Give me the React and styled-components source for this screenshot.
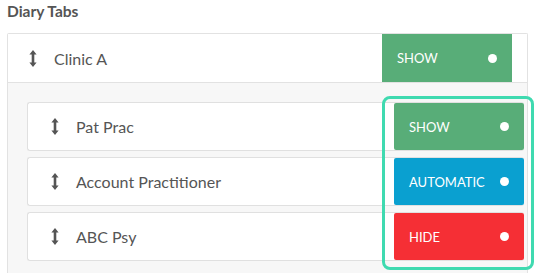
import React from 'react'
import styled, { createGlobalStyle } from 'styled-components'

const GlobalStyle = createGlobalStyle`
  html, body {
    margin: 0;
    padding: 0;
    background: #fff;
    font-family: Lato, "Open Sans", sans-serif;
  }
`

const tabs = [
  { name: 'Pat Prac', mode: 'show' },
  { name: 'Account Practitioner', mode: 'automatic' },
  { name: 'ABC Psy', mode: 'hide' },
]

const modeColors = {
  show: '#58ad78',
  automatic: '#0aa0d0',
  hide: '#f52f35',
}

const MoveIcon = () => (
  <svg width="8" height="17" viewBox="0 0 8 17">
    <path d="M4 0 L7.6 4.6 L5.3 4.6 L5.3 12.4 L7.6 12.4 L4 17 L0.4 12.4 L2.7 12.4 L2.7 4.6 L0.4 4.6 Z" fill="#555" />
  </svg>
)

const App = () => {
  return (
    <>
      <GlobalStyle />
      <Page>
        <Title>Diary Tabs</Title>
        <Panel>
          <Header>
            <Handle $offset="21px"><MoveIcon /></Handle>
            <Label>Clinic A</Label>
            <ModeButton $mode="show" $flat>
              <span>Show</span>
              <Dot />
            </ModeButton>
          </Header>
          <Body>
            <List>
              {tabs.map((t) => (
                <Row key={t.name}>
                  <Handle $offset="23px"><MoveIcon /></Handle>
                  <Label>{t.name}</Label>
                  <ModeButton $mode={t.mode}>
                    <span>{t.mode}</span>
                    <Dot />
                  </ModeButton>
                </Row>
              ))}
              <Highlight />
            </List>
          </Body>
        </Panel>
      </Page>
    </>
  )
}

export default App

const Page = styled.div`
  width: 536px;
  height: 273px;
  overflow: hidden;
  padding-left: 7px;
  box-sizing: border-box;
`

const Title = styled.div`
  height: 33px;
  padding-top: 2px;
  box-sizing: border-box;
  font-size: 15.5px;
  font-weight: 700;
  color: #555;
`

const Panel = styled.div`
  width: 521px;
  box-sizing: border-box;
  border: 1px solid #e2e2e2;
  border-bottom: none;
  border-radius: 2px 2px 0 0;
`

const Header = styled.div`
  display: flex;
  align-items: stretch;
  height: 49px;
  box-sizing: border-box;
  background: #fff;
  border-bottom: 1px solid #e2e2e2;
  padding-right: 15px;
`

const Handle = styled.div`
  display: flex;
  align-items: center;
  padding-left: ${(p) => p.$offset};
  width: 8px;
  margin-right: 17px;
`

const Label = styled.div`
  flex: 1;
  display: flex;
  align-items: center;
  font-size: 16px;
  color: #555;
`

const ModeButton = styled.div`
  width: 130px;
  display: flex;
  align-items: center;
  justify-content: space-between;
  box-sizing: border-box;
  padding: 0 15px;
  background: ${(p) => modeColors[p.$mode]};
  color: #fff;
  font-size: 13px;
  text-transform: uppercase;
  border-radius: ${(p) => (p.$flat ? '0' : '2px')};
`

const Dot = styled.i`
  width: 9px;
  height: 9px;
  border-radius: 50%;
  background: #fff;
`

const Body = styled.div`
  background: #f7f7f7;
  padding: 19px 3px 19px 19px;
`

const List = styled.div`
  position: relative;
  display: flex;
  flex-direction: column;
  gap: 6px;
`

const Row = styled.div`
  display: flex;
  align-items: stretch;
  height: 49px;
  box-sizing: border-box;
  background: #fff;
  border: 1px solid #e0e0e0;
  border-right: none;
  border-radius: 3px;
`

const Highlight = styled.div`
  position: absolute;
  top: -6px;
  bottom: -9px;
  right: -10px;
  width: 152px;
  box-sizing: border-box;
  border: 3px solid #3fdab0;
  border-radius: 8px;
  pointer-events: none;
`
